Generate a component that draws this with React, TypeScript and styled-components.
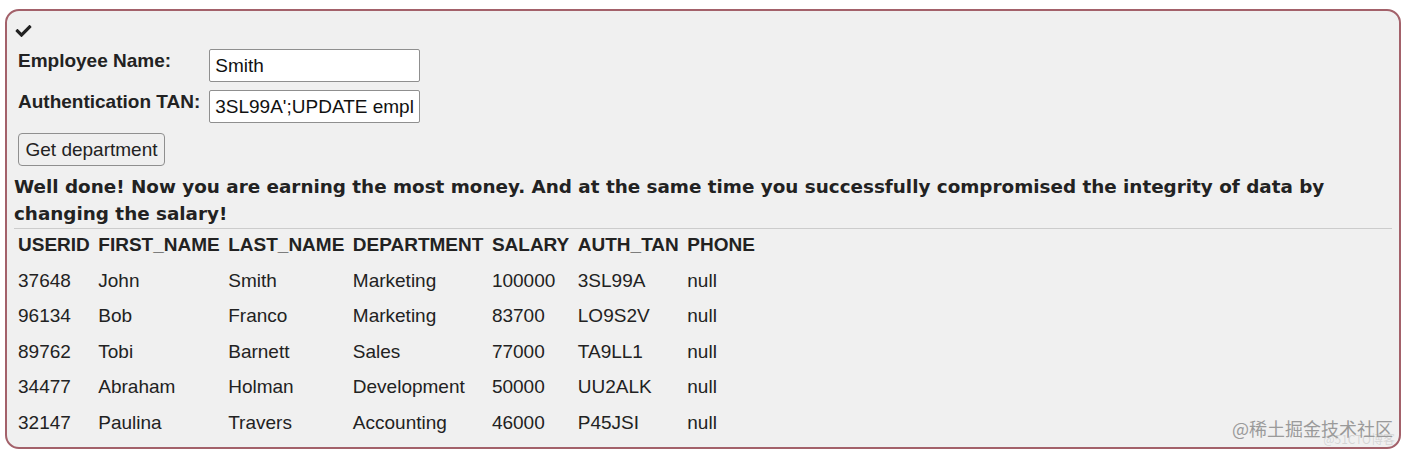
import styled, { createGlobalStyle } from "styled-components";
import { FaCheck } from "react-icons/fa";

const GlobalStyle = createGlobalStyle`
  html, body {
    margin: 0;
    padding: 0;
    background: #ffffff;
  }
  body {
    font-family: "Liberation Sans", Arial, sans-serif;
    color: #222222;
  }
`;

const employees = [
  ["37648", "John", "Smith", "Marketing", "100000", "3SL99A", "null"],
  ["96134", "Bob", "Franco", "Marketing", "83700", "LO9S2V", "null"],
  ["89762", "Tobi", "Barnett", "Sales", "77000", "TA9LL1", "null"],
  ["34477", "Abraham", "Holman", "Development", "50000", "UU2ALK", "null"],
  ["32147", "Paulina", "Travers", "Accounting", "46000", "P45JSI", "null"],
];

const columns = [
  "USERID",
  "FIRST_NAME",
  "LAST_NAME",
  "DEPARTMENT",
  "SALARY",
  "AUTH_TAN",
  "PHONE",
];

const App = () => {
  return (
    <>
      <GlobalStyle />
      <Panel>
        <Check />
        <FormTable>
          <tbody>
            <tr>
              <LabelCell>Employee Name:</LabelCell>
              <td>
                <TextInput defaultValue="Smith" />
              </td>
            </tr>
            <tr>
              <LabelCell>Authentication TAN:</LabelCell>
              <td>
                <TextInput defaultValue="3SL99A';UPDATE employees SET SALARY=99999 WHERE USERID='37648" />
              </td>
            </tr>
          </tbody>
        </FormTable>
        <SubmitButton type="button">Get department</SubmitButton>
        <Message>
          Well done! Now you are earning the most money. And at the same time
          you successfully compromised the integrity of data by changing the
          salary!
        </Message>
        <Divider />
        <DataTable>
          <thead>
            <tr>
              {columns.map((c) => (
                <HeadCell key={c}>{c}</HeadCell>
              ))}
            </tr>
          </thead>
          <tbody>
            {employees.map((row) => (
              <tr key={row[0]}>
                {row.map((v, i) => (
                  <Cell key={i}>{v}</Cell>
                ))}
              </tr>
            ))}
          </tbody>
        </DataTable>
        <Watermark>
          @稀土掘金技术社区
          <SubMark>@51CTO博客</SubMark>
        </Watermark>
      </Panel>
    </>
  );
};

export default App;

const Panel = styled.div`
  position: relative;
  box-sizing: border-box;
  margin: 9px 0 0 5px;
  width: 1396px;
  height: 440px;
  padding: 12px 7px 0 7px;
  background: #f0f0f0;
  border: 2px solid #a3616a;
  border-radius: 14px;
  font-size: 19px;
`;

const Check = styled(FaCheck)`
  display: block;
  width: 19px;
  height: 16px;
  color: #222222;
`;

const FormTable = styled.table`
  border-collapse: separate;
  border-spacing: 0;
  margin-top: 9px;
`;

const LabelCell = styled.td`
  font-weight: bold;
  vertical-align: top;
  padding: 2px 8px 0 4px;
  white-space: nowrap;
`;

const TextInput = styled.input`
  box-sizing: border-box;
  width: 211px;
  height: 33px;
  margin: 0 0 6px 0;
  padding: 0 5px;
  font-family: "Liberation Sans", Arial, sans-serif;
  font-size: 19px;
  color: #111111;
  background: #ffffff;
  border: 1px solid #8f8f8f;
  border-radius: 2px;
  outline: none;
`;

const SubmitButton = styled.button`
  display: block;
  box-sizing: border-box;
  margin: 3px 0 0 4px;
  width: 147px;
  height: 33px;
  padding: 0 6px;
  font-family: "Liberation Sans", Arial, sans-serif;
  font-size: 19px;
  color: #222222;
  background: #efefef;
  border: 1px solid #8f8f8f;
  border-radius: 4px;
`;

const Message = styled.p`
  margin: 7px 0 0 0;
  font-family: "DejaVu Sans", Verdana, sans-serif;
  font-weight: bold;
  font-size: 18.35px;
  line-height: 27px;
  color: #222222;
`;

const Divider = styled.hr`
  margin: 1px 0 0 0;
  border: none;
  border-top: 1px solid #cccccc;
`;

const DataTable = styled.table`
  border-collapse: collapse;
  margin-top: 1px;
`;

const HeadCell = styled.th`
  text-align: left;
  font-weight: bold;
  padding: 4px 4.5px 7px 4px;
  white-space: nowrap;
`;

const Cell = styled.td`
  padding: 6px 4.5px 6px 4px;
  height: 23.5px;
  white-space: nowrap;
`;

const Watermark = styled.div`
  position: absolute;
  right: 6px;
  bottom: 8px;
  font-family: "Noto Sans CJK SC", sans-serif;
  font-size: 18px;
  line-height: 22px;
  color: #9a9a9a;
`;

const SubMark = styled.span`
  position: absolute;
  right: -2px;
  top: 15px;
  font-size: 12px;
  line-height: 14px;
  color: rgba(160, 160, 160, 0.35);
`;
